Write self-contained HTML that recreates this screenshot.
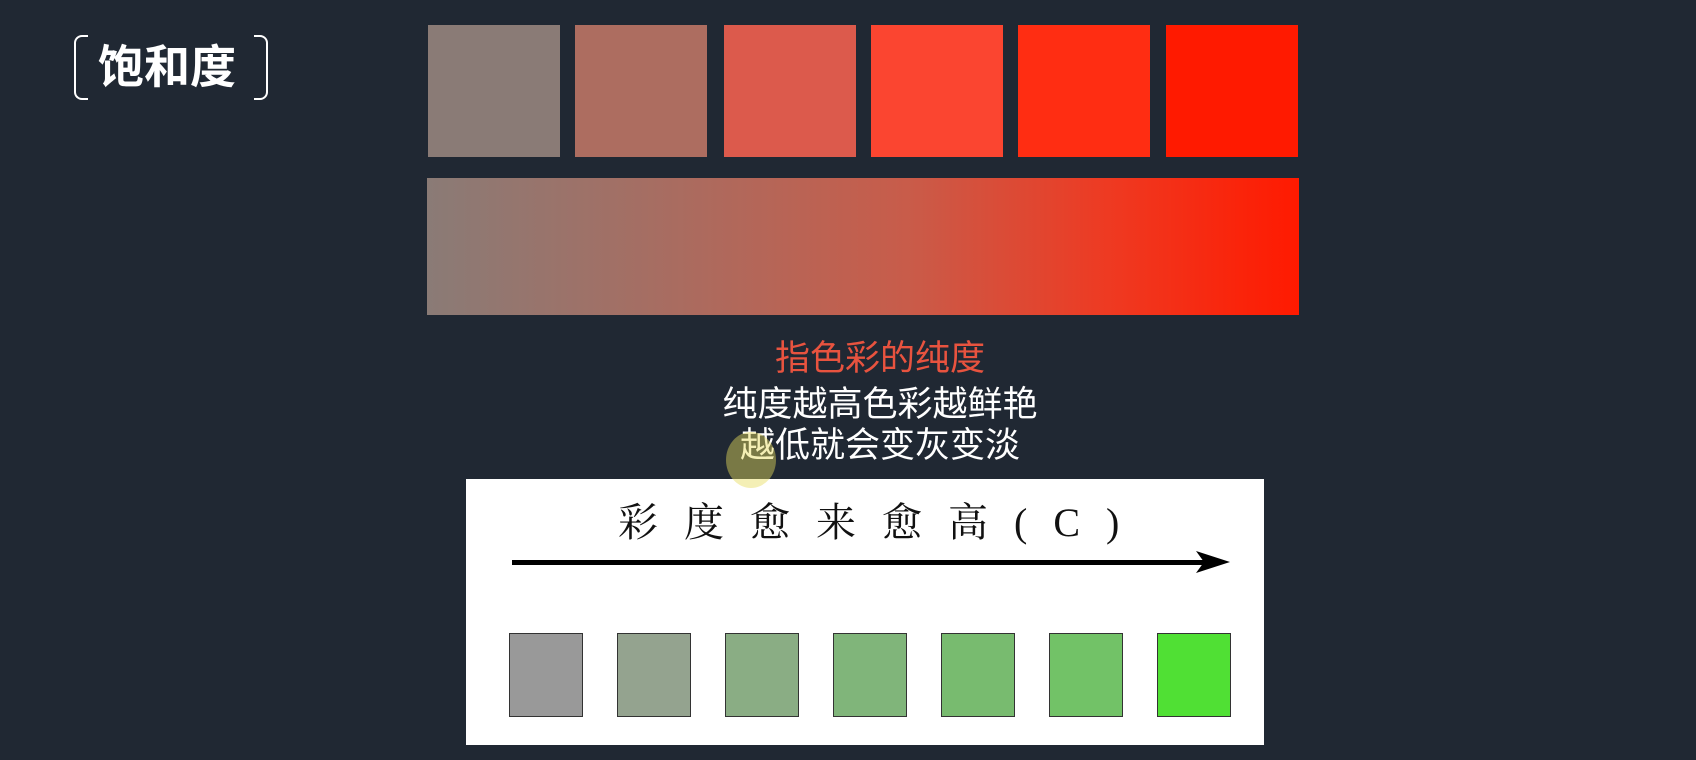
<!DOCTYPE html>
<html><head><meta charset="utf-8"><style>
*{margin:0;padding:0;box-sizing:border-box}
body{width:1696px;height:760px;background:#202833;position:relative;overflow:hidden;font-family:"Liberation Sans","Noto Sans CJK SC",sans-serif}
.a{position:absolute}
.sq{position:absolute;top:25px;width:132px;height:132px}
.g{position:absolute;top:633px;width:74px;height:84px;border:1.5px solid #333}
.t{position:absolute;left:0;width:1760px;text-align:center;font-size:35px;line-height:40px}
</style></head><body>
<div class="a" style="left:74px;top:35px;width:14px;height:65px;border:2px solid #fff;border-right:none;border-radius:8px 0 0 8px"></div>
<div class="a" style="left:254px;top:35px;width:14px;height:65px;border:2px solid #fff;border-left:none;border-radius:0 8px 8px 0"></div>
<div class="a" style="left:98px;top:38px;font-size:46px;font-weight:bold;color:#fff;line-height:58px">饱和度</div>
<div class="sq" style="left:428px;background:#8a7b76"></div>
<div class="sq" style="left:575px;background:#ad6d60"></div>
<div class="sq" style="left:724px;background:#dc5a4c"></div>
<div class="sq" style="left:871px;background:#fb4530"></div>
<div class="sq" style="left:1018px;background:#ff2d12"></div>
<div class="sq" style="left:1166px;background:#ff1a00"></div>
<div class="a" style="left:427px;top:178px;width:872px;height:137px;background:linear-gradient(90deg,#8a7b76,#a56e63 25%,#c85c4a 55%,#ee3a22 78%,#ff1a00)"></div>
<div class="t" style="top:339px;color:#e8533f">指色彩的纯度</div>
<div class="t" style="top:385px;color:#fff">纯度越高色彩越鲜艳</div>
<div class="t" style="top:426px;color:#fff">越低就会变灰变淡</div>
<div class="a" style="left:466px;top:479px;width:798px;height:266px;background:#fff"></div>
<div class="a" style="left:726px;top:432px;width:50px;height:56px;border-radius:50%;background:rgba(230,220,90,0.45)"></div>
<div class="a" style="left:618px;top:500px;font-family:'Liberation Serif','Noto Serif CJK SC',serif;font-size:40px;letter-spacing:26px;color:#111;line-height:46px">彩度愈来愈高(C)</div>
<div class="a" style="left:512px;top:560px;width:705px;height:5px;background:#000"></div>
<svg class="a" style="left:1196px;top:551px" width="34" height="22"><path d="M0 0 L34 11 L0 22 L8 11 Z" fill="#000"/></svg>
<div class="g" style="left:509px;background:#999"></div>
<div class="g" style="left:617px;background:#94a38f"></div>
<div class="g" style="left:725px;background:#8aad84"></div>
<div class="g" style="left:833px;background:#80b57a"></div>
<div class="g" style="left:941px;background:#78bb6f"></div>
<div class="g" style="left:1049px;background:#72c267"></div>
<div class="g" style="left:1157px;background:#50e034"></div>
</body></html>
